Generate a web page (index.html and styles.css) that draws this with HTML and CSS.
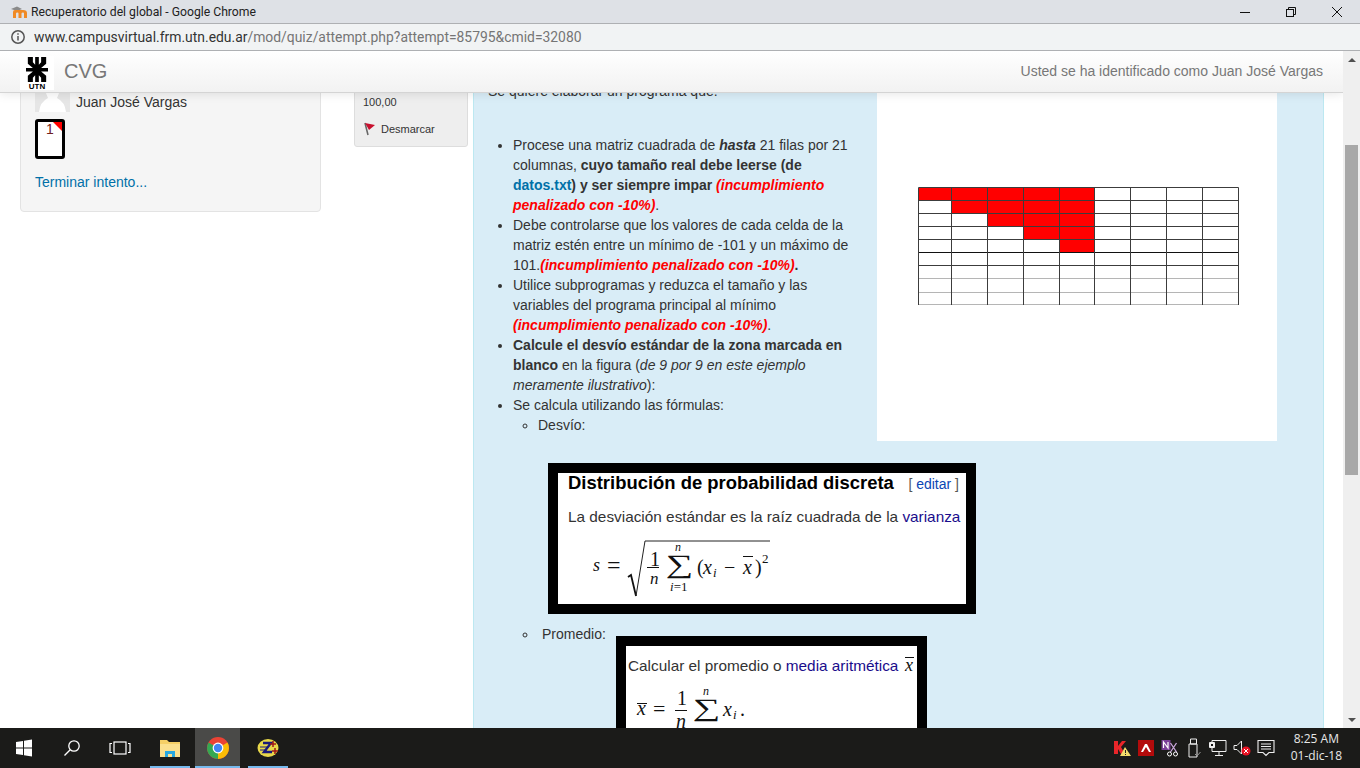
FILE: index.html
```html
<!DOCTYPE html>
<html lang="es">

<head>
  <meta charset="UTF-8" />
  <meta name="viewport" content="width=device-width, initial-scale=1" />
  <title>Recuperatorio del global</title>
  <link rel="stylesheet" href="styles.css">
</head>

<body>
  <div class="title-bar">
    <svg class="tab-icon" width="20" height="14" viewBox="0 0 20 14">
      <path d="M1 4 L7 1.5 L12 4 L7 6 Z" fill="#8a8a8a" />
      <path d="M3 13 V7 Q3 5 5 5 H13 Q17 5 17 8 V13 H14 V8.5 Q14 7.5 13 7.5 Q11.5 7.5 11.5 8.5 V13 H8.5 V8.5 Q8.5 7.5 7.5 7.5 Q6 7.5 6 8.5 V13 Z" fill="#f08a24" />
    </svg>
    <span class="window-title">Recuperatorio del global - Google Chrome</span>
    <div class="window-buttons">
      <svg width="14" height="14" viewBox="0 0 14 14"><path d="M2 7.5 H12" stroke="#111" stroke-width="1" /></svg>
      <svg width="14" height="14" viewBox="0 0 14 14" fill="none" stroke="#111"><rect x="2.5" y="4.5" width="7" height="7" /><path d="M4.5 4.5 V2.5 H11.5 V9.5 H9.5" /></svg>
      <svg width="14" height="14" viewBox="0 0 14 14"><path d="M2 2 L12 12 M12 2 L2 12" stroke="#111" stroke-width="1" /></svg>
    </div>
  </div>

  <div class="address-bar">
    <svg width="16" height="16" viewBox="0 0 16 16" fill="none" stroke="#555" stroke-width="1.5">
      <circle cx="8" cy="8" r="6.2" />
      <path d="M8 7 V11.5 M8 4.2 V5.8" />
    </svg>
    <span class="url"><span class="url-host">www.campusvirtual.frm.utn.edu.ar</span>/mod/quiz/attempt.php?attempt=85795&amp;cmid=32080</span>
  </div>

  <div class="viewport">
    <div class="page">
      <header class="navbar">
        <div class="utn-logo">
          <svg width="22" height="25" viewBox="0 0 24 24" preserveAspectRatio="none">
            <path d="M2 0 H7.5 V5 L10 7.5 V0 H14 V7.5 L16.5 5 V0 H22 V6.5 L16.5 10.5 H24 V14 H16.5 L22 18 V24 H16.5 V20 L14 17.5 V24 H10 V17.5 L7.5 20 V24 H2 V18 L7.5 14 H0 V10.5 H7.5 L2 6.5 Z" fill="#000" />
          </svg>
          <span class="utn-text">UTN</span>
        </div>
        <span class="brand">CVG</span>
        <span class="login-info">Usted se ha identificado como Juan José Vargas</span>
      </header>

      <div class="columns">
        <aside class="nav-block">
          <div class="user-row">
            <div class="user-picture">
              <svg width="35" height="35" viewBox="0 0 35 35">
                <path d="M4 35 Q5 25 13 21 Q9 14 10 0 H25 Q26 14 22 21 Q30 25 31 35 Z" fill="#fff" />
              </svg>
            </div>
            <span>Juan José Vargas</span>
          </div>
          <div class="qn-button"><span>1</span></div>
          <a class="finish-link" href="#">Terminar intento...</a>
        </aside>

        <div class="info-box">
          <div class="grade">100,00</div>
          <div class="flag-row">
            <svg width="14" height="16" viewBox="0 0 14 16">
              <path d="M2 2 L5 14" stroke="#666" stroke-width="1.6" />
              <path d="M2 2 L12 4 L6 9 Z" fill="#c8102e" />
            </svg>
            <span>Desmarcar</span>
          </div>
        </div>

        <main class="formulation">
          <p class="intro">Se quiere elaborar un programa que:</p>

          <div class="matrix-figure">
            <svg width="322" height="119" viewBox="0 0 322 119">
              <g fill="#f00">
                <rect x="1" y="1" width="176" height="13" />
                <rect x="34" y="14" width="143" height="13" />
                <rect x="69" y="27" width="108" height="13" />
                <rect x="105" y="40" width="72" height="13" />
                <rect x="141" y="53" width="36" height="13" />
              </g>
              <g stroke="#3c3c3c" stroke-width="1" fill="none">
                <path d="M.5 .5 H320.5 M.5 13.5 H320.5 M.5 26.5 H320.5 M.5 39.5 H320.5 M.5 52.5 H320.5" />
                <path d="M.5 65.5 H320.5" stroke="#111" />
                <path d="M.5 78.5 H320.5" />
                <path d="M.5 91.5 H320.5 M.5 105.5 H320.5 M.5 117.5 H320.5" stroke="#b5b5b5" />
                <path d="M.5 .5 V118 M33.5 .5 V118 M69.5 .5 V118 M105.5 .5 V118 M141.5 .5 V118 M176.5 .5 V118 M212.5 .5 V118 M248.5 .5 V118 M284.5 .5 V118 M320.5 .5 V118" />
              </g>
            </svg>
          </div>

          <ul class="rules">
            <li>Procese una matriz cuadrada de <b><i>hasta</i></b> 21 filas por 21 columnas, <b>cuyo tamaño real debe leerse (de <a href="#">datos.txt</a>) y ser siempre impar</b> <b class="penalty">(incumplimiento penalizado con -10%)</b>.</li>
            <li>Debe controlarse que los valores de cada celda de la matriz estén entre un mínimo de -101 y un máximo de 101.<b class="penalty">(incumplimiento penalizado con -10%)</b><b>.</b></li>
            <li>Utilice subprogramas y reduzca el tamaño y las variables del programa principal al mínimo <b class="penalty">(incumplimiento penalizado con -10%)</b>.</li>
            <li><b>Calcule el desvío estándar de la zona marcada en blanco</b> en la figura (<i>de 9 por 9 en este ejemplo meramente ilustrativo</i>):</li>
            <li>Se calcula utilizando las fórmulas:
              <ul>
                <li>Desvío:</li>
              </ul>
            </li>
          </ul>

          <div class="shot shot-std">
            <div class="shot-head">
              <span class="shot-title">Distribución de probabilidad discreta</span>
              <span class="shot-edit">[ <a href="#">editar</a> ]</span>
            </div>
            <p class="shot-text">La desviación estándar es la raíz cuadrada de la <a href="#">varianza</a></p>
            <svg class="formula" width="190" height="62" viewBox="0 0 190 62">
              <g class="math">
                <text x="3" y="32" font-size="18" font-style="italic">s</text>
                <text x="17" y="33.5" font-size="24">=</text>
                <path d="M38 38 L41 36 L46 57" fill="none" stroke="#111" stroke-width="1.8" />
                <path d="M46 57 L55 2 H180" fill="none" stroke="#222" stroke-width="1" />
                <text x="60" y="27" font-size="20">1</text>
                <path d="M57 28.5 H69" stroke="#111" />
                <text x="60" y="45" font-size="17" font-style="italic">n</text>
                <text transform="translate(75.7 34.3) scale(1.14 .77)" font-size="34">∑</text>
                <text x="85" y="12" font-size="12" font-style="italic">n</text>
                <text x="80" y="52" font-size="13"><tspan font-style="italic">i</tspan>=1</text>
                <text x="107" y="35" font-size="20">(</text>
                <text x="113" y="35" font-size="20" font-style="italic">x</text>
                <text x="123" y="38" font-size="13" font-style="italic">i</text>
                <text x="134" y="35" font-size="20">−</text>
                <text x="153" y="35" font-size="20" font-style="italic">x</text>
                <path d="M153 17.5 H163" stroke="#111" />
                <text x="165" y="35" font-size="20">)</text>
                <text x="172" y="24" font-size="13">2</text>
              </g>
            </svg>
          </div>

          <ul class="rules rules-sub">
            <li>Promedio:</li>
          </ul>

          <div class="shot shot-mean">
            <p class="shot-text">Calcular el promedio o <a href="#">media aritmética</a>
              <svg class="inline-xbar" width="13" height="20" viewBox="0 0 13 20">
                <g class="math"><text x="2" y="15" font-size="18" font-style="italic">x</text><path d="M2 1.5 H11" stroke="#111" /></g>
              </svg>
            </p>
            <svg class="formula" width="150" height="60" viewBox="0 0 150 60">
              <g class="math">
                <text x="7" y="31" font-size="20" font-style="italic">x</text>
                <path d="M7 19.5 H17" stroke="#111" />
                <text x="23" y="32" font-size="22">=</text>
                <text x="47" y="21" font-size="20">1</text>
                <path d="M45 26.5 H57" stroke="#111" />
                <text x="46" y="44" font-size="20" font-style="italic">n</text>
                <text transform="translate(62.7 31.7) scale(1.14 .73)" font-size="34">∑</text>
                <text x="73" y="11" font-size="12" font-style="italic">n</text>
                <text x="93" y="32" font-size="20" font-style="italic">x</text>
                <text x="103" y="35" font-size="13" font-style="italic">i</text>
                <text x="110" y="32" font-size="20">.</text>
              </g>
            </svg>
          </div>
        </main>
      </div>
    </div>

    <div class="scrollbar">
      <span class="arrow arrow-up"></span>
      <div class="scroll-track"><div class="scroll-thumb"></div></div>
      <span class="arrow arrow-down"></span>
    </div>
  </div>

  <footer class="taskbar">
    <div class="task-left">
      <div class="task-item">
        <svg width="18" height="18" viewBox="0 0 18 18" fill="#fff">
          <path d="M1 3 L8 2 V8.5 H1 Z M9 1.8 L17 .6 V8.5 H9 Z M1 9.5 H8 V16 L1 15 Z M9 9.5 H17 V17.4 L9 16.2 Z" />
        </svg>
      </div>
      <div class="task-item">
        <svg width="18" height="18" viewBox="0 0 18 18" fill="none" stroke="#fff" stroke-width="1.3">
          <circle cx="11" cy="7" r="5.2" />
          <path d="M7.2 10.8 L1.5 16.5" />
        </svg>
      </div>
      <div class="task-item task-view">
        <svg width="22" height="14" viewBox="0 0 22 14" fill="none" stroke="#fff" stroke-width="1.2">
          <rect x="5" y="1" width="12" height="12" />
          <path d="M3 2.5 H1 V11.5 H3 M19 2.5 H21 V11.5 H19" />
        </svg>
      </div>
      <div class="task-item running folder">
        <svg width="22" height="20" viewBox="0 0 22 20">
          <path d="M1 2 H8 L10 4 H21 V19 H1 Z" fill="#f5cf66" />
          <path d="M1 6 H21 V19 H1 Z" fill="#fbe08e" />
          <path d="M6 19 V13 H16 V19 H13 V16 H9 V19 Z" fill="#29a8e0" />
        </svg>
      </div>
      <div class="task-item running active">
        <svg width="24" height="24" viewBox="0 0 24 24">
          <circle cx="12" cy="12" r="11" fill="#ea4335" />
          <path d="M12 12 L21.5 6.5 A11 11 0 0 1 12 23 Z" fill="#fbbc05" />
          <path d="M12 12 L12 23 A11 11 0 0 1 2.5 6.5 Z" fill="#34a853" />
          <circle cx="12" cy="12" r="5.4" fill="#fff" />
          <circle cx="12" cy="12" r="4.2" fill="#4285f4" />
        </svg>
      </div>
      <div class="task-item running zeta">
        <svg width="22" height="20" viewBox="0 0 22 20">
          <ellipse cx="11" cy="10" rx="10.5" ry="9" fill="#e8d84a" />
          <path d="M6 5 H14 L7 14 H15" fill="none" stroke="#1a1a7a" stroke-width="2.4" />
          <path d="M3 9 H12 M3 12 H10" stroke="#1a1a7a" stroke-width="1" />
          <path d="M16 3 V9 M13 6 H19 M18 10 V16 M15 13 H21" stroke="#a01818" stroke-width="1.5" />
        </svg>
      </div>
    </div>

    <div class="tray">
      <svg width="18" height="18" viewBox="0 0 18 18">
        <path d="M1 2 H5 V7 L9 2 H13 L8 8 L12 15 H8 L5 10 V15 H1 Z" fill="#e8262a" />
        <path d="M12 8 L18 17 H7 Z" fill="#f2dc6b" />
        <path d="M12.5 11 V14 M12.5 15 V16" stroke="#222" />
      </svg>
      <svg width="16" height="16" viewBox="0 0 16 16">
        <rect width="16" height="16" fill="#b30b0b" />
        <path d="M3 12 L7 4 H9 L13 12 H11 L8 7 L5 12 Z" fill="#fff" />
      </svg>
      <svg width="17" height="17" viewBox="0 0 17 17">
        <rect width="9" height="10" fill="#7b3f98" />
        <path d="M2 8 V2 L6.5 8 V2" fill="none" stroke="#fff" stroke-width="1.2" />
        <path d="M9 3 L15 12 M15 3 L9 12" stroke="#c9a6dc" stroke-width="1.3" />
        <circle cx="8" cy="14" r="2" fill="none" stroke="#fff" />
        <circle cx="14" cy="14" r="2" fill="none" stroke="#fff" />
      </svg>
      <svg width="14" height="20" viewBox="0 0 14 20" fill="none" stroke="#eee" stroke-width="1">
        <path d="M3.5 1 H9.5 V6 H3.5 Z M2 6 H10 V19 H2 Z" />
        <path d="M8 16 L10 18 L13.5 14" stroke="#999" />
      </svg>
      <svg width="18" height="18" viewBox="0 0 18 18" fill="none" stroke="#eee" stroke-width="1">
        <path d="M3 1.5 H17 V12.5 H3 Z M10 12.5 V16.5 M6 16.5 H14 M.5 3.5 H5.5 V8.5 H.5 Z" />
        <rect x="1.5" y="4.5" width="3" height="3" fill="#111" />
      </svg>
      <svg class="volume" width="18" height="18" viewBox="0 0 18 18">
        <path d="M1 6.5 H4 L8.5 2 V15 L4 10.5 H1 Z" fill="none" stroke="#eee" stroke-width="1" />
        <circle cx="13" cy="12" r="4.5" fill="#e81123" />
        <path d="M11 10 L15 14 M15 10 L11 14" stroke="#fff" stroke-width="1" />
      </svg>
      <svg width="18" height="18" viewBox="0 0 18 18" fill="none" stroke="#eee" stroke-width="1.1">
        <path d="M1 1.5 H17 V13.5 H12 L9 16.5 L6 13.5 H1 Z M4 5 H14 M4 7.5 H14 M4 10 H14" />
      </svg>
      <div class="clock">
        <span>8:25 AM</span>
        <span>01-dic-18</span>
      </div>
    </div>
  </footer>
</body>

</html>
```

FILE: styles.css
```css
* {
  box-sizing: border-box;
}

html, body {
  height: 100%;
}

body {
  margin: 0;
  height: 768px;
  overflow: hidden;
  display: flex;
  flex-direction: column;
  font-family: "Liberation Sans", Arial, sans-serif;
  font-size: 14px;
  line-height: 20px;
  color: #333;
  background-color: white;
}

/* browser window */
.title-bar {
  height: 24px;
  flex: none;
  display: flex;
  align-items: center;
  padding-left: 10px;
  background-color: #dee1e6;
  border-bottom: 1px solid #aeb0b3;
}

.tab-icon {
  margin-right: 1px;
}

.window-title {
  font-family: Roboto, "Liberation Sans", sans-serif;
  font-size: 12.2px;
  color: #222;
}

.window-buttons {
  margin-left: auto;
  display: flex;
  gap: 32px;
  padding-right: 16px;
}

.address-bar {
  height: 27px;
  flex: none;
  display: flex;
  align-items: center;
  gap: 8px;
  padding-left: 10px;
  background-color: #f1f3f4;
  border-bottom: 1px solid #aeb0b3;
}

.url {
  font-family: Roboto, "Liberation Sans", sans-serif;
  font-size: 13.9px;
  color: #757575;
}

.url-host {
  color: #333;
}

.viewport {
  flex: 1;
  min-height: 0;
  display: flex;
}

.page {
  position: relative;
  flex: 1;
  min-width: 0;
  overflow: hidden;
}

/* moodle page */
.navbar {
  position: absolute;
  top: 0;
  left: 0;
  right: 0;
  z-index: 2;
  height: 42px;
  display: flex;
  align-items: center;
  padding: 0 20px 2px 20px;
  background: linear-gradient(#ffffff, #f2f2f2);
  border-bottom: 1px solid #d4d4d4;
  box-shadow: 0 1px 10px rgba(0, 0, 0, 0.1);
}

.utn-logo {
  width: 34px;
  height: 34px;
  align-self: flex-start;
  margin-top: 5px;
  padding-top: 1px;
  display: flex;
  flex-direction: column;
  align-items: center;
  background-color: white;
}

.utn-text {
  margin-top: 1px;
  font-size: 8px;
  font-weight: bold;
  line-height: 7px;
  color: black;
}

.brand {
  margin-left: 10px;
  font-size: 20px;
  color: #777;
}

.login-info {
  margin-left: auto;
  color: #777;
}

.columns {
  display: flex;
  align-items: flex-start;
  padding-left: 20px;
}

.nav-block {
  width: 301px;
  height: 161px;
  flex: none;
  padding: 25px 14px 0;
  background-color: #f5f5f5;
  border: 1px solid #e3e3e3;
  border-radius: 4px;
}

.user-row {
  display: flex;
  align-items: flex-end;
  gap: 6px;
  height: 35px;
}

.user-picture {
  width: 35px;
  height: 35px;
  background-color: #e6e6e6;
}

.user-picture svg {
  display: block;
}

.qn-button {
  position: relative;
  width: 30px;
  height: 40px;
  margin-top: 7px;
  overflow: hidden;
  background-color: white;
  border: 3px solid black;
  border-radius: 3px;
  text-align: center;
  line-height: 15px;
  color: #702020;
}

.qn-button::after {
  content: "";
  position: absolute;
  top: 0;
  right: 0;
  border-top: 9px solid #f00;
  border-left: 9px solid transparent;
}

.finish-link {
  display: block;
  margin-top: 13px;
  color: #0070a8;
  text-decoration: none;
}

.info-box {
  width: 114px;
  height: 96px;
  flex: none;
  margin-left: 33px;
  padding: 40px 8px 0 8px;
  font-size: 11px;
  background-color: #eee;
  border: 1px solid #ddd;
  border-radius: 3px;
}

.flag-row {
  display: flex;
  align-items: center;
  gap: 4px;
  margin-top: 7px;
  color: #333;
}

.formulation {
  width: 851px;
  height: 800px;
  flex: none;
  margin-left: 5px;
  padding: 30px 46px 0 14px;
  background-color: #d9edf7;
  border: 1px solid #bce8f1;
  border-width: 0 1px;
}

.intro {
  margin: 0;
}

.matrix-figure {
  float: right;
  width: 400px;
  height: 378px;
  margin: -38px 0 0 22px;
  padding: 124px 0 0 41px;
  background-color: white;
}

.matrix-figure svg {
  display: block;
}

.rules {
  margin: 34px 0 0;
  padding-left: 25px;
}

.rules ul {
  margin: 0;
  padding-left: 25px;
}

.rules a {
  color: #0070a8;
  text-decoration: none;
}

.penalty {
  font-style: italic;
  color: #f00;
}

.rules-sub {
  clear: both;
  margin: 0;
  padding-left: 50px;
  list-style-type: circle;
}

.rules-sub li {
  padding-left: 4px;
}

/* pictures pasted into the question */
.shot {
  overflow: hidden;
  background-color: white;
  border: 10px solid black;
}

.shot a {
  color: #1a0d8c;
  text-decoration: none;
}

.shot-std {
  clear: both;
  width: 428px;
  height: 151px;
  margin: 28px 0 10px 60px;
  padding: 0 0 0 10px;
}

.shot-head {
  display: flex;
  align-items: baseline;
  justify-content: space-between;
  width: 391px;
}

.shot-title {
  font-size: 18.45px;
  font-weight: bold;
  color: black;
}

.shot-edit {
  color: #555;
}

.shot-edit a {
  color: #0b46b4;
}

.shot-text {
  margin: 13px 0 0;
  font-size: 15.35px;
  white-space: nowrap;
  color: #333;
}

.formula {
  display: block;
}

.shot-std .formula {
  margin: 12px 0 0 22px;
}

.shot-mean {
  width: 311px;
  height: 120px;
  margin: -8px 0 0 128px;
  padding-left: 2px;
}

.shot-mean .shot-text {
  margin-top: 10px;
}

.inline-xbar {
  vertical-align: -5px;
}

.shot-mean .formula {
  margin: 8px 0 0 2px;
}

.math text {
  font-family: "Liberation Serif", serif;
  fill: #111;
}

/* scrollbar */
.scrollbar {
  width: 17px;
  flex: none;
  display: flex;
  flex-direction: column;
  background-color: #efefef;
}

.arrow {
  height: 17px;
  flex: none;
  display: flex;
  align-items: center;
  justify-content: center;
}

.arrow::before {
  content: "";
  border-left: 4px solid transparent;
  border-right: 4px solid transparent;
}

.arrow-up::before {
  border-bottom: 4px solid #505050;
}

.arrow-down::before {
  border-top: 4px solid #505050;
}

.scroll-track {
  flex: 1;
  padding: 77px 2px 0;
}

.scroll-thumb {
  height: 330px;
  background-color: #a8a8a8;
}

/* windows taskbar */
.taskbar {
  height: 40px;
  flex: none;
  display: flex;
  justify-content: space-between;
  background-color: #1b1b19;
}

.task-left {
  display: flex;
}

.task-item {
  width: 48px;
  height: 40px;
  display: flex;
  align-items: center;
  justify-content: center;
  color: white;
}

.running {
  width: 40px;
  box-shadow: inset 0 -2px 0 #76b9ed;
}

.folder {
  margin-left: 6px;
}

.active {
  width: 45px;
  margin-left: 5px;
  background-color: #4a4a48;
}

.zeta {
  margin-left: 8px;
}

.tray {
  display: flex;
  align-items: center;
  padding-right: 18px;
}

.tray svg {
  width: 24px;
}

.clock {
  display: flex;
  flex-direction: column;
  align-items: center;
  margin: 0 0 2px 13px;
  font-family: "Open Sans", sans-serif;
  font-size: 12px;
  line-height: 17px;
  color: #e8e8e8;
}
```
